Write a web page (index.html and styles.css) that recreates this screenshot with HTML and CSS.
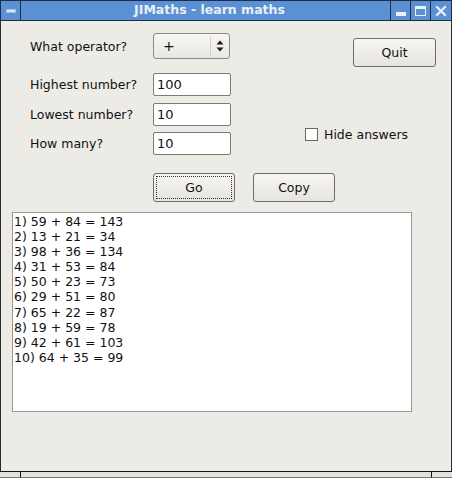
FILE: index.html
```html
<!DOCTYPE html>
<html>
<head>
<meta charset="utf-8">
<link rel="stylesheet" href="styles.css">
</head>
<body>
<div class="window">
  <div class="titlebar">
    <div class="tb-btn tb-menu"><span class="menu-bar"></span></div>
    <div class="tb-title">JIMaths - learn maths</div>
    <div class="tb-btn"><span class="min-bar"></span></div>
    <div class="tb-btn"><span class="max-box"></span></div>
    <div class="tb-btn tb-close">
      <svg width="12" height="12" viewBox="0 0 12 12"><path d="M2 2 L10 10 M10 2 L2 10" stroke="#e8f0fa" stroke-width="2.2" stroke-linecap="square"/></svg>
    </div>
  </div>
  <div class="client">
    <div class="top">
      <div class="form">
        <div class="row row-combo">
          <span class="label">What operator?</span>
          <div class="combo">
            <span class="combo-val">+</span>
            <span class="combo-arrows">
              <svg width="8" height="12" viewBox="0 0 8 12"><path d="M4 0.5 L7.5 4.5 L0.5 4.5 Z M4 11.5 L7.5 7.5 L0.5 7.5 Z" fill="#1a1a1a"/></svg>
            </span>
          </div>
        </div>
        <div class="row row-1">
          <span class="label">Highest number?</span>
          <div class="field">100</div>
        </div>
        <div class="row row-2">
          <span class="label">Lowest number?</span>
          <div class="field">10</div>
        </div>
        <div class="row row-3">
          <span class="label">How many?</span>
          <div class="field">10</div>
        </div>
      </div>
      <div class="side">
        <div class="btn btn-quit">Quit</div>
        <div class="check">
          <span class="box"></span>
          <span>Hide answers</span>
        </div>
      </div>
    </div>
    <div class="actions">
      <div class="btn btn-go"><span class="focus">Go</span></div>
      <div class="btn btn-copy">Copy</div>
    </div>
    <div class="output">1) 59 + 84 = 143
2) 13 + 21 = 34
3) 98 + 36 = 134
4) 31 + 53 = 84
5) 50 + 23 = 73
6) 29 + 51 = 80
7) 65 + 22 = 87
8) 19 + 59 = 78
9) 42 + 61 = 103
10) 64 + 35 = 99</div>
  </div>
  <div class="bottom">
    <div class="bseg bseg-l"></div>
    <div class="bseg bseg-m"></div>
    <div class="bseg bseg-r"></div>
  </div>
</div>
</body>
</html>
```
FILE: styles.css
```css
* { box-sizing: border-box; }
html, body { margin: 0; padding: 0; }
body {
  width: 452px;
  height: 478px;
  overflow: hidden;
  font-family: "DejaVu Sans", sans-serif;
  font-size: 12.5px;
  color: #111;
  background: #edebe6;
}
.window {
  width: 452px;
  height: 478px;
  display: flex;
  flex-direction: column;
}
.titlebar {
  height: 21px;
  flex-shrink: 0;
  display: flex;
  background: #5b90d3;
  border: 1px solid #1e2d4a;
}
.tb-btn {
  width: 20px;
  display: flex;
  align-items: center;
  justify-content: center;
  border-left: 1px solid #1e2d4a;
  background: #5b90d3;
}
.tb-menu {
  border-left: none;
  border-right: 1px solid #1e2d4a;
}
.tb-close { width: 21px; }
.menu-bar {
  width: 10px;
  height: 4px;
  background: #dfe9f6;
  border: 1px solid #9dbbe3;
}
.min-bar {
  width: 10px;
  height: 4px;
  background: #e8f0fa;
  margin-top: 7px;
}
.max-box {
  width: 11px;
  height: 10px;
  border: 1px solid #e8f0fa;
  border-top-width: 3px;
}
.tb-title {
  flex: 1;
  text-align: center;
  color: #e6eef9;
  font-weight: bold;
  font-size: 12.5px;
  line-height: 18px;
  padding-left: 8px;
}
.client {
  flex: 1;
  border-left: 1px solid #2a2a2a;
  border-right: 1px solid #2a2a2a;
  padding: 12px 0 0 11px;
  display: flex;
  flex-direction: column;
}
.top {
  display: flex;
}
.form {
  display: flex;
  flex-direction: column;
  width: 219px;
  flex-shrink: 0;
}
.row {
  display: flex;
  align-items: center;
}
.label {
  width: 141px;
  flex-shrink: 0;
  padding-left: 18px;
  white-space: nowrap;
}
.row-1 { margin-top: 14px; }
.row-2 { margin-top: 7px; }
.row-3 { margin-top: 6px; }
.combo {
  width: 77px;
  height: 26px;
  flex-shrink: 0;
  border: 1px solid #8d8a84;
  border-radius: 3px;
  background: linear-gradient(#f7f6f3, #e9e7e2);
  display: flex;
  align-items: center;
}
.combo-val {
  flex: 1;
  padding-left: 9px;
  font-size: 14px;
}
.combo-arrows {
  width: 19px;
  height: 20px;
  border-left: 1px solid #d2cfc8;
  display: flex;
  align-items: center;
  justify-content: center;
}
.field {
  width: 78px;
  height: 23px;
  flex-shrink: 0;
  border: 1px solid #7d7a75;
  border-radius: 2px;
  background: #fff;
  padding-left: 3px;
  line-height: 21px;
  font-size: 13px;
}
.side {
  display: flex;
  flex-direction: column;
}
.btn {
  height: 29px;
  border: 1px solid #6f6c67;
  border-radius: 3px;
  background: linear-gradient(#f7f6f3, #e6e4df);
  display: flex;
  align-items: center;
  justify-content: center;
}
.btn-quit {
  width: 83px;
  margin-left: 122px;
  margin-top: 5px;
}
.check {
  display: flex;
  align-items: center;
  margin-top: 60px;
  margin-left: 74px;
  white-space: nowrap;
}
.box {
  width: 13px;
  height: 13px;
  border: 1px solid #6a6761;
  background: #fff;
  margin-right: 6px;
}
.actions {
  display: flex;
  margin-top: 18px;
  padding-left: 141px;
  gap: 18px;
}
.btn-go, .btn-copy { width: 82px; }
.btn-go { padding: 2px; }
.focus {
  width: 100%;
  height: 100%;
  border: 1px dotted #333;
  display: flex;
  align-items: center;
  justify-content: center;
}
.output {
  margin-top: 10px;
  width: 400px;
  height: 200px;
  border: 1px solid #9a9893;
  background: #fff;
  white-space: pre;
  line-height: 15.1px;
  padding: 1px 0 0 1px;
  font-size: 12.5px;
}
.bottom {
  height: 7px;
  flex-shrink: 0;
  display: flex;
  border-top: 1px solid #111;
  background: #e4e2dd;
}
.bseg { height: 100%; border-bottom: 1px solid #777; }
.bseg-l { width: 21px; border-right: 1px solid #111; }
.bseg-m { flex: 1; border-right: 1px solid #111; }
.bseg-r { width: 20px; }
```
